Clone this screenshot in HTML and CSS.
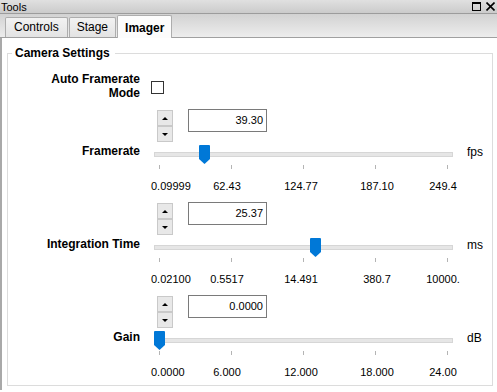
FILE: index.html
```html
<!DOCTYPE html>
<html lang="en">
<head>
<meta charset="UTF-8">
<title>Tools</title>
<link rel="stylesheet" href="styles.css">
</head>
<body>

<!-- заголовок окна -->
<div class="titlebar">
    <span class="title">Tools</span>
    <span class="title-icons">
        <span class="icon-restore"></span>
        <svg class="icon-close" width="9" height="9" viewBox="0 0 9 9"><path d="M0.5 0.5 L8.5 8.5 M8.5 0.5 L0.5 8.5" stroke="#000" stroke-width="1.6"/></svg>
    </span>
</div>

<!-- вкладки -->
<div class="tabstrip">
    <div class="tab tab-wide">Controls</div>
    <div class="tab">Stage</div>
    <div class="tab tab-active">Imager</div>
</div>

<div class="panel">
    <fieldset class="group">
        <legend>Camera Settings</legend>

        <div class="row-check">
            <div class="label">Auto Framerate<br>Mode</div>
            <div class="checkbox"></div>
        </div>

        <!-- Framerate -->
        <div class="section">
            <div class="spin-row">
                <div class="spin">
                    <div class="spin-btn"><span class="arrow-up"></span></div>
                    <div class="spin-btn"><span class="arrow-down"></span></div>
                </div>
                <div class="value-box">39.30</div>
            </div>
            <div class="label slider-label">Framerate</div>
            <div class="slider">
                <div class="track"></div>
                <svg class="thumb" style="left: 48px" width="11" height="19" viewBox="0 0 11 19"><path d="M1 0 H10 Q11 0 11 1 V14 L5.5 19 L0 14 V1 Q0 0 1 0 Z" fill="#0078d7"/></svg>
            </div>
            <div class="unit">fps</div>
            <div class="ticks"><span></span><span></span><span></span><span></span><span></span></div>
            <div class="tick-labels">
                <span class="first">0.09999</span><span>62.43</span><span>124.77</span><span>187.10</span><span>249.4</span>
            </div>
        </div>

        <!-- Integration Time -->
        <div class="section">
            <div class="spin-row">
                <div class="spin">
                    <div class="spin-btn"><span class="arrow-up"></span></div>
                    <div class="spin-btn"><span class="arrow-down"></span></div>
                </div>
                <div class="value-box">25.37</div>
            </div>
            <div class="label slider-label">Integration Time</div>
            <div class="slider">
                <div class="track"></div>
                <svg class="thumb" style="left: 159px" width="11" height="19" viewBox="0 0 11 19"><path d="M1 0 H10 Q11 0 11 1 V14 L5.5 19 L0 14 V1 Q0 0 1 0 Z" fill="#0078d7"/></svg>
            </div>
            <div class="unit">ms</div>
            <div class="ticks"><span></span><span></span><span></span><span></span><span></span></div>
            <div class="tick-labels">
                <span class="first">0.02100</span><span>0.5517</span><span>14.491</span><span>380.7</span><span>10000.</span>
            </div>
        </div>

        <!-- Gain -->
        <div class="section">
            <div class="spin-row">
                <div class="spin">
                    <div class="spin-btn"><span class="arrow-up"></span></div>
                    <div class="spin-btn"><span class="arrow-down"></span></div>
                </div>
                <div class="value-box">0.0000</div>
            </div>
            <div class="label slider-label">Gain</div>
            <div class="slider">
                <div class="track"></div>
                <svg class="thumb" style="left: 3px" width="11" height="19" viewBox="0 0 11 19"><path d="M1 0 H10 Q11 0 11 1 V14 L5.5 19 L0 14 V1 Q0 0 1 0 Z" fill="#0078d7"/></svg>
            </div>
            <div class="unit">dB</div>
            <div class="ticks"><span></span><span></span><span></span><span></span><span></span></div>
            <div class="tick-labels">
                <span class="first">0.0000</span><span>6.000</span><span>12.000</span><span>18.000</span><span>24.00</span>
            </div>
        </div>
    </fieldset>
</div>

</body>
</html>
```

FILE: styles.css
```css
body {
    margin: 0;
    width: 497px;
    height: 392px;
    overflow: hidden;
    background-color: #ffffff;
    font-family: "Liberation Sans", Arial, sans-serif;
    font-size: 12px;
    color: #000000;
}

/* Заголовок */
.titlebar {
    height: 13px;
    display: flex;
    align-items: center;
    justify-content: space-between;
    background: linear-gradient(#e0e0e0, #cbcbcb);
    border-bottom: 1px solid #9c9c9c;
}

.title {
    font-size: 11px;
    padding-left: 1px;
}

.title-icons {
    display: flex;
    align-items: center;
    gap: 5px;
    padding-right: 2px;
}

.icon-restore {
    width: 7px;
    height: 6px;
    border: 1px solid #000;
    border-top-width: 2px;
}

/* Вкладки */
.tabstrip {
    height: 23px;
    display: flex;
    align-items: flex-end;
    padding-left: 5px;
    background: linear-gradient(#d2d2d2, #ededed);
    border-bottom: 1px solid #a0a0a0;
}

.tab {
    height: 19px;
    line-height: 19px;
    padding: 0 7px;
    margin-right: 1px;
    background: linear-gradient(#f2f2f2, #e3e3e3);
    border: 1px solid #adadad;
    border-bottom: none;
    border-radius: 2px 2px 0 0;
}

.tab-wide {
    padding: 0 8px;
}

.tab-active {
    height: 22px;
    line-height: 24px;
    margin-bottom: -1px;
    background: #fcfcfc;
    font-weight: bold;
}

/* Панель */
.panel {
    border-left: 2px solid #a9a9a9;
    padding-top: 2px;
    height: 350px;
}

.group {
    margin: 6px 4px 0 5px;
    padding: 12px 0 6px 0;
    border: 1px solid #dcdcdc;
}

.group legend {
    margin-left: 4px;
    padding: 0 5px 0 3px;
    font-weight: bold;
    line-height: 14px;
}

.label {
    font-weight: bold;
    text-align: right;
    line-height: 14px;
}

.row-check {
    display: grid;
    grid-template-columns: 132px 20px;
    column-gap: 11px;
    margin-bottom: 2px;
}

.checkbox {
    width: 11px;
    height: 11px;
    margin-top: 9px;
    border: 1px solid #333333;
    background-color: #ffffff;
}

/* Секция со слайдером */
.section {
    display: grid;
    grid-template-columns: 132px 302px 1fr;
    grid-template-rows: 33px 22px 5px 23px;
    column-gap: 11px;
    margin-top: 10px;
}

.spin-row {
    grid-column: 2;
    grid-row: 1;
    display: flex;
    align-items: flex-start;
    padding-left: 6px;
}

.spin {
    width: 16px;
}

.spin-btn {
    height: 14px;
    border: 1px solid #c9c9c9;
    background-color: #e8e8e8;
    display: flex;
    align-items: center;
    justify-content: center;
}

.arrow-up {
    border-left: 3px solid transparent;
    border-right: 3px solid transparent;
    border-bottom: 3px solid #000;
}

.arrow-down {
    border-left: 3px solid transparent;
    border-right: 3px solid transparent;
    border-top: 3px solid #000;
}

.value-box {
    width: 74px;
    height: 21px;
    margin-left: 15px;
    margin-top: -1px;
    padding-right: 3px;
    border: 1px solid #7a7a7a;
    text-align: right;
    font-size: 11px;
    line-height: 21px;
}

.slider-label {
    grid-column: 1;
    grid-row: 2;
    padding-top: 1px;
}

.slider {
    grid-column: 2;
    grid-row: 2;
    position: relative;
}

.track {
    margin-left: 3px;
    margin-top: 9px;
    height: 3px;
    border: 1px solid #d6d6d6;
    background-color: #e6e6e6;
}

.thumb {
    position: absolute;
    top: 2px;
}

.unit {
    grid-column: 3;
    grid-row: 2;
    padding-left: 3px;
    padding-top: 2px;
    line-height: 14px;
}

.ticks {
    grid-column: 2;
    grid-row: 3;
    display: flex;
    gap: 71px;
    padding-left: 8px;
}

.ticks span {
    width: 1px;
    height: 4px;
    background-color: #b4b4b4;
}

.tick-labels {
    grid-column: 2;
    grid-row: 4;
    display: grid;
    grid-template-columns: 40px 72px 76px 76px 56px;
    padding-top: 9px;
    font-size: 11px;
    line-height: 14px;
    text-align: center;
    white-space: nowrap;
}

.tick-labels .first {
    text-align: left;
}
```
